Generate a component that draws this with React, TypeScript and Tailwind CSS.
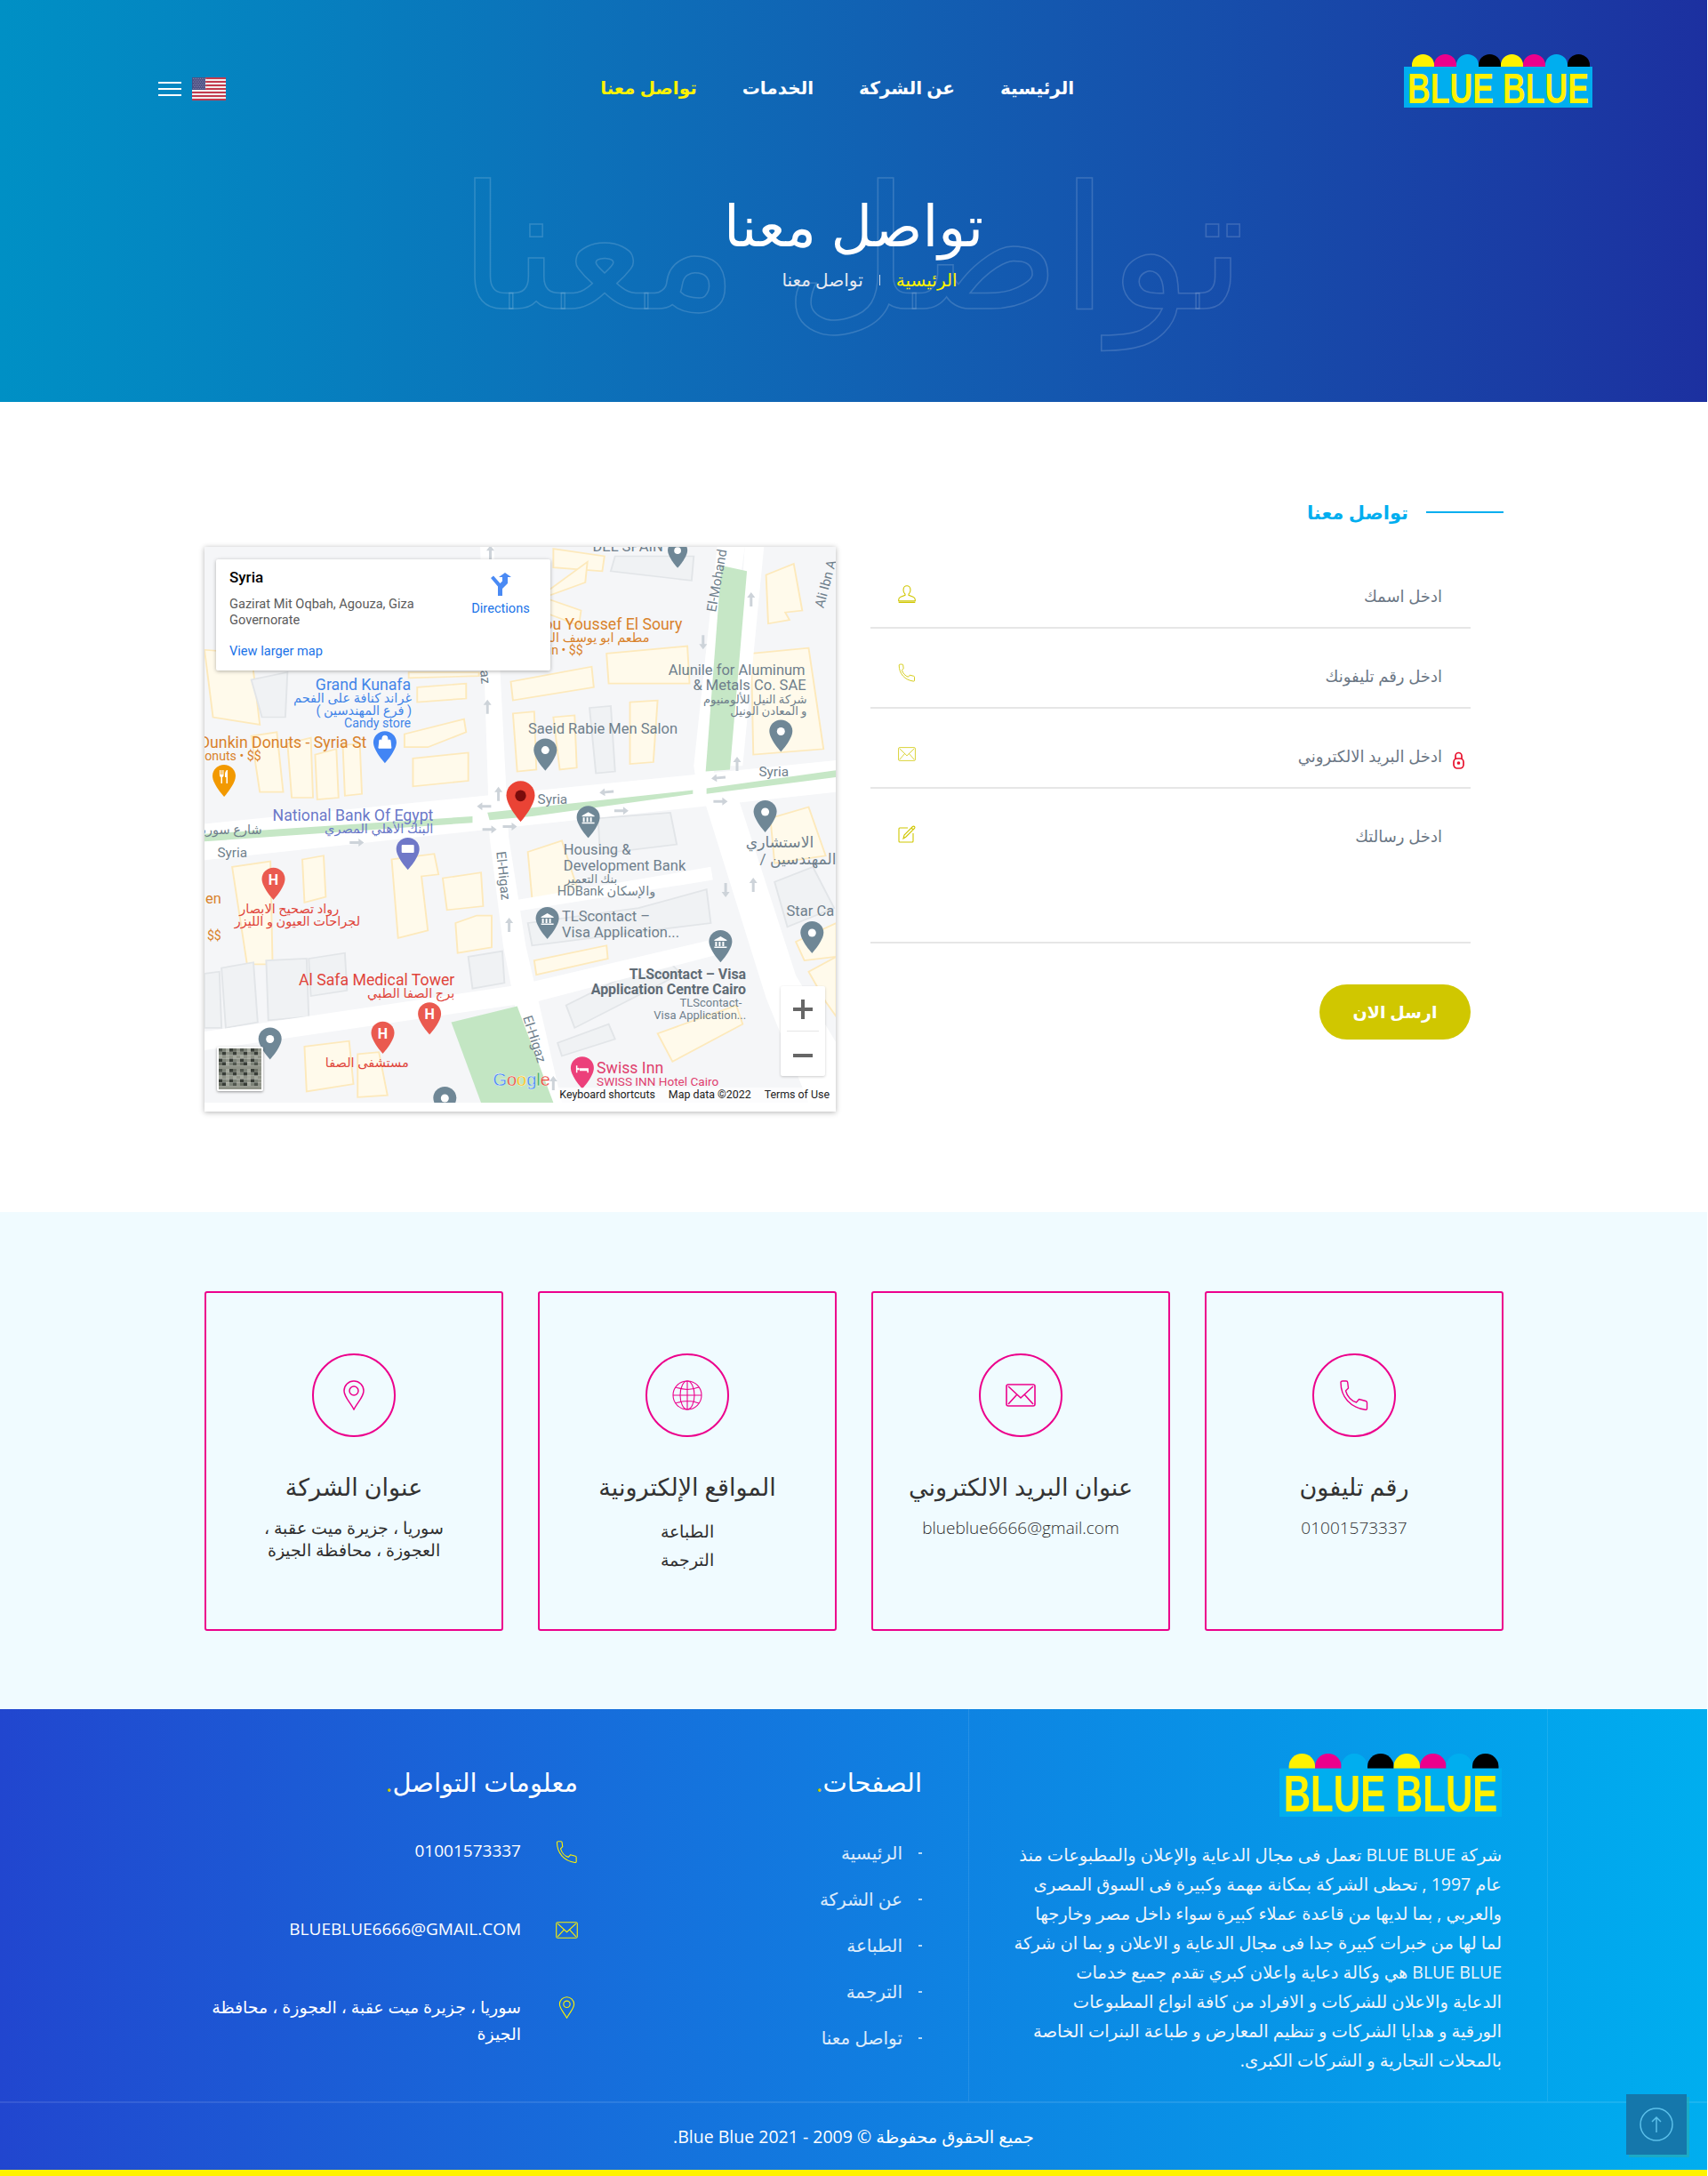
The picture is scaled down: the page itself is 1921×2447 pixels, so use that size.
import React from "react";

const ar = "font-['Open_Sans','DejaVu_Sans',sans-serif]";

function Logo({ w, h }: { w: number; h: number }) {
  const colors = ["#fff200", "#ec008c", "#00aeef", "#000", "#fff200", "#ec008c", "#00aeef", "#000"];
  return (
    <svg width={w} height={h} viewBox="0 0 212 60" preserveAspectRatio="none" className="block shrink-0" dir="ltr">
      {colors.map((c, i) => (
        <path key={i} d={`M${9 + i * 25} 15V12a12.5 12 0 0 1 25 0V15Z`} fill={c} />
      ))}
      <rect x="0" y="14" width="212" height="46" fill="#00aeef" />
      <text transform="translate(4,55) scale(0.743,1)" direction="ltr" fontFamily="'Liberation Sans',sans-serif" fontWeight="700" fontSize="48" fill="#fff200">BLUE BLUE</text>
    </svg>
  );
}

function PhoneIcon({ c, w = 34, h = 34, sw = 1.4 }: { c: string; w?: number; h?: number; sw?: number }) {
  return (
    <svg width={w} height={h} viewBox="0 0 34 34" fill="none" stroke={c} strokeWidth={sw} strokeLinejoin="round" className="block shrink-0">
      <path d="M2 2.500C2 1.500 3 1 4 1h4c1 0 1.600.5 1.700 1.500l.8 6.500-3 3c1.500 6 6.500 11.500 12 13l3-3.500 7.500 2c1 .3 1.500.8 1.500 1.800V32c0 1-1 1.500-2 1.300C13 31 2 19 2 2.500Z" />
    </svg>
  );
}
function MailIcon({ c, w = 34, h = 38, sw = 1.6 }: { c: string; w?: number; h?: number; sw?: number }) {
  return (
    <svg width={w} height={h} viewBox="0 0 34 26" preserveAspectRatio="none" fill="none" stroke={c} strokeWidth={sw} className="block shrink-0">
      <rect x="1" y="1" width="32" height="24" rx="2" />
      <path d="M3 3l14 13L31 3M3 23l10-11M31 23L21 12" />
    </svg>
  );
}
function PinIcon({ c, w = 24, h = 34, sw = 1.5 }: { c: string; w?: number; h?: number; sw?: number }) {
  return (
    <svg width={w} height={h} viewBox="0 0 24 34" fill="none" stroke={c} strokeWidth={sw} className="block shrink-0">
      <path d="M12 33C8 25 1 19 1 12a11 11 0 0 1 22 0c0 7-7 13-11 21Z" />
      <circle cx="12" cy="12" r="5" />
    </svg>
  );
}
function GlobeIcon({ c }: { c: string }) {
  return (
    <svg width="34" height="34" viewBox="0 0 34 34" fill="none" stroke={c} strokeWidth="1.1" className="block shrink-0">
      <circle cx="17" cy="17" r="16" />
      <ellipse cx="17" cy="17" rx="8" ry="16" />
      <path d="M17 1v32M1 17h32M4 8c8 3 18 3 26 0M4 26c8-3 18-3 26 0" />
    </svg>
  );
}
function UserIcon({ c }: { c: string }) {
  return (
    <svg width="20" height="20" viewBox="0 0 20 20" fill="none" stroke={c} strokeWidth="1.1" className="block shrink-0">
      <path d="M6 5.500C6 2.500 8 .7 10 .7s4 1.800 4 4.800c0 2.200-1 3.700-2 4.600v1.200l5 2c1.500.6 2.300 1.700 2.300 3.200v1.300H.7v-1.300c0-1.500.8-2.600 2.300-3.200l5-2v-1.200c-1-.9-2-2.400-2-4.600Z" />
      <path d="M.7 19.300h18.600" strokeWidth="1.600" />
    </svg>
  );
}
function EditIcon({ c }: { c: string }) {
  return (
    <svg width="20" height="20" viewBox="0 0 20 20" fill="none" stroke={c} strokeWidth="1.1" className="block shrink-0">
      <path d="M11 3H2a1 1 0 0 0-1 1v14a1 1 0 0 0 1 1h14a1 1 0 0 0 1-1V9" />
      <path d="M6 15l1-4L16.500 1.500a1.400 1.400 0 0 1 2 0 1.400 1.400 0 0 1 0 2L9 13l-3 2ZM15 3l2 2" />
    </svg>
  );
}

const navItems = ["الرئيسية", "عن الشركة", "الخدمات"];

function Flag() {
  const stripes = Array.from({ length: 13 });
  const dots: React.ReactNode[] = [];
  for (let r = 0; r < 7; r++) for (let k = 0; k < 8; k++) dots.push(<circle key={`${r}-${k}`} cx={1.5 + k * 2 + (r % 2)} cy={1.2 + r * 1.9} r=".45" fill="#c9cde0" />);
  return (
    <svg width="38" height="26" viewBox="0 0 38 26" className="block shrink-0">
      {stripes.map((_, i) => <rect key={i} y={i * 2} width="38" height="2" fill={i % 2 ? "#f3eded" : "#c23a4d"} />)}
      <rect width="15" height="14" fill="#4c4f83" />
      {dots}
    </svg>
  );
}

function Hero() {
  return (
    <section className="relative h-[452px] overflow-hidden bg-gradient-to-r from-[#0090c5] to-[#1c30a0]">
      <div className="absolute left-[535px] top-[152px] w-[866px] text-center whitespace-nowrap text-[194px] leading-[240px] text-transparent [-webkit-text-stroke:1.5px_rgba(255,255,255,0.16)]">تواصل معنا</div>
      <header className="relative flex items-start pr-[129px] pl-[178px] pt-[61px]">
        <Logo w={212} h={60} />
        <nav className="mr-[371px] flex gap-[51px] pt-[24px] text-[20px] font-bold leading-[28px] text-white whitespace-nowrap">
          {navItems.map((t) => <a key={t}>{t}</a>)}
          <a className="text-[#fff200]">تواصل معنا</a>
        </nav>
        <div className="mr-auto flex items-center gap-[12px] pt-[26px]" dir="ltr">
          <div className="flex w-[26px] flex-col gap-[5px]">
            <span className="h-[2px] bg-white" />
            <span className="h-[2px] bg-white" />
            <span className="h-[2px] bg-white" />
          </div>
          <Flag />
        </div>
      </header>
      <div className="relative mt-[96px] text-center">
        <h1 className="text-[64px] font-normal leading-[72px] text-white">تواصل معنا</h1>
        <div className="mt-[12px] flex items-center justify-center gap-[18px] pl-[36px] text-[20px] leading-[28px] text-[#e4e8f0]">
          <span className="text-[#fff200]">الرئيسية</span>
          <span className="h-[12px] w-px bg-[#cfd8e8]" />
          <span>تواصل معنا</span>
        </div>
      </div>
    </section>
  );
}

const S = (x: number, y: number) => [+((x - 20) / 2.09).toFixed(1), +((y - 35) / 2.376).toFixed(1)];

function Pin({ x, y, c, k = "dot", s = 1 }: { x: number; y: number; c: string; k?: string; s?: number }) {
  const [px, py] = S(x, y);
  return (
    <g transform={`translate(${px - 13 * s},${py - 18 * s}) scale(${s})`}>
      <path d="M13 0C5.800 0 0 5.600 0 12.600 0 22 13 36 13 36s13-14 13-23.400C26 5.600 20.200 0 13 0Z" fill={c} />
      {k === "dot" && <circle cx="13" cy="13" r="4.500" fill="#fff" />}
      {k === "bank" && <path d="M6 11l7-4 7 4v1H6Zm1 2h2v5H7Zm4 0h2v5h-2Zm4 0h2v5h-2ZM6 18.500h14V20H6Z" fill="#fff" />}
      {k === "H" && <text x="13" y="19" textAnchor="middle" fontSize="16" fontWeight="700" fill="#fff" fontFamily="Roboto,sans-serif">H</text>}
      {k === "food" && <path d="M8 6v6c0 1 1 2 1.500 2v7h1.500v-7c.5 0 1.500-1 1.500-2V6h-1v5h-.8V6h-.9v5H9V6Zm8 0c-1.500 1-2 3-2 5v3h1.500v7H17V6Z" fill="#fff" />}
      {k === "shop" && <path d="M7 10h12l1 9H6Zm3 0V8a3 3 0 0 1 6 0v2" fill="#fff" stroke="#fff" strokeWidth="1" />}
      {k === "atm" && <rect x="6" y="8" width="14" height="9" fill="#fff" rx="1" />}
      {k === "bed" && <path d="M6 10v8h1.500v-2h11v2H20v-5H10v3H7.500v-6Zm2.500 2.500a1.300 1.300 0 1 0 .01 0Z" fill="#fff" />}
    </g>
  );
}

type L = [string, number, number, string, number, string?, number?];
const blue = "#4285e8", gray = "#6f7f8c", orange = "#d9822b", red = "#e0453b", dark = "#5f6b75", purple = "#6a78c8";
const labels: L[] = [
  ["DEL SPAIN", 1098, 46, "end", 14, gray],
  ["ou Youssef El Soury", 1143, 255, "end", 15, orange],
  ["مطعم ابو يوسف السوري", 1066, 289, "end", 11, orange],
  ["in • $$", 910, 322, "end", 12, orange],
  ["Alunile for Aluminum", 1432, 376, "end", 14, gray],
  ["& Metals Co. SAE", 1434, 417, "end", 14, gray],
  ["شركة النيل للألومنيوم", 1436, 452, "end", 10, gray],
  ["و المعادن الونيل", 1436, 484, "end", 10, gray],
  ["Grand Kunafa", 505, 418, "end", 15, blue],
  ["غراند كنافة على الفحم", 507, 451, "end", 11, blue],
  ["( فرع المهندسين )", 507, 484, "end", 11, blue],
  ["Candy store", 505, 518, "end", 12, blue],
  ["Dunkin Donuts - Syria St", 401, 571, "end", 15, orange],
  ["onuts • $$", 153, 605, "end", 12, orange],
  ["Saeid Rabie Men Salon", 1132, 534, "end", 14, gray],
  ["Syria", 803, 722, "start", 13, gray],
  ["Syria", 1323, 648, "start", 13, gray],
  ["Syria", 50, 864, "start", 13, gray],
  ["National Bank Of Egypt", 558, 767, "end", 15, purple],
  ["البنك الأهلي المصري", 558, 801, "end", 11, purple],
  ["شارع سوريا", 155, 802, "end", 11, gray],
  ["Housing &", 864, 858, "start", 14, gray],
  ["Development Bank", 864, 899, "start", 14, gray],
  ["بنك التعمير", 990, 932, "end", 10, gray],
  ["HDBank والإسكان", 1080, 966, "end", 11, gray],
  ["TLScontact –", 860, 1036, "start", 14, gray],
  ["Visa Application...", 860, 1077, "start", 14, gray],
  ["TLScontact – Visa", 1293, 1189, "end", 13.5, dark, 700],
  ["Application Centre Cairo", 1293, 1231, "end", 13.5, dark, 700],
  ["TLScontact-", 1283, 1264, "end", 11, gray],
  ["Visa Application...", 1293, 1297, "end", 11, gray],
  ["Star Ca", 1388, 1022, "start", 14, gray],
  ["الاستشاري", 1452, 838, "end", 13, gray],
  ["/ المهندسين", 1505, 882, "end", 13, gray],
  ["Al Safa Medical Tower", 608, 1207, "end", 15, red],
  ["برج الصفا الطبي", 608, 1240, "end", 11, red],
  ["مستشفى الصفا", 500, 1426, "end", 11, red],
  ["رواد تصحيح الابصار", 336, 1014, "end", 11, red],
  ["لجراحات العيون و الليزر", 386, 1046, "end", 11, red],
  ["en", 22, 988, "start", 14, orange],
  ["$$", 26, 1086, "start", 12, orange],
  ["Swiss Inn", 942, 1441, "start", 15, "#e0406e"],
  ["SWISS INN Hotel Cairo", 942, 1474, "start", 11.5, "#e0406e"],
];

const yellow: [number, number][][] = [
  [[20, 310], [130, 320], [150, 510], [40, 490]],
  [[130, 540], [190, 530], [205, 690], [150, 690]],
  [[215, 560], [270, 545], [275, 705], [225, 705]],
  [[280, 590], [330, 575], [335, 705], [285, 710]],
  [[345, 565], [385, 560], [390, 695], [350, 700]],
  [[510, 600], [640, 585], [640, 660], [510, 675]],
  [[490, 535], [630, 495], [635, 530], [545, 570], [490, 570]],
  [[500, 370], [665, 370], [665, 380], [500, 385]],
  [[520, 410], [635, 400], [635, 440], [520, 450]],
  [[740, 395], [930, 355], [935, 410], [745, 445]],
  [[965, 320], [1155, 300], [1160, 400], [970, 400]],
  [[745, 480], [795, 475], [800, 630], [755, 635]],
  [[840, 490], [890, 485], [895, 625], [855, 630]],
  [[1020, 450], [1085, 445], [1075, 610], [1020, 615]],
  [[1305, 320], [1440, 305], [1475, 575], [1310, 590]],
  [[1340, 110], [1405, 80], [1425, 205], [1385, 210], [1395, 230], [1345, 240]],
  [[840, 40], [960, 60], [955, 100], [840, 90]],
  [[830, 150], [920, 75], [915, 130], [830, 165]],
  [[830, 175], [905, 205], [900, 245], [830, 215]],
  [[460, 870], [560, 855], [570, 910], [530, 915], [545, 1060], [475, 1080]],
  [[580, 920], [670, 905], [675, 995], [590, 1005]],
  [[610, 1040], [660, 1020], [695, 1020], [695, 1105], [615, 1120]],
  [[85, 890], [175, 875], [180, 1150], [120, 1150]],
  [[250, 870], [300, 860], [305, 970], [255, 985]],
  [[780, 850], [860, 820], [900, 960], [790, 975]],
  [[795, 1140], [965, 1100], [968, 1135], [800, 1178]],
  [[1085, 1335], [1270, 1260], [1285, 1310], [1120, 1410]],
  [[1350, 760], [1440, 730], [1480, 860], [1360, 880]],
  [[255, 1370], [360, 1355], [370, 1470], [260, 1490]],
  [[380, 1390], [430, 1385], [450, 1500], [380, 1505]],
  [[1410, 1090], [1505, 1040], [1505, 1130], [1430, 1140]],
  [[1440, 1170], [1505, 1130], [1505, 1290], [1480, 1250]],
];
const greys: [number, number][][] = [
  [[130, 390], [215, 370], [210, 490], [155, 490]],
  [[925, 465], [975, 460], [985, 635], [940, 640]],
  [[985, 60], [1170, 60], [1165, 125], [975, 100]],
  [[945, 760], [1115, 745], [1130, 830], [950, 855]],
  [[60, 1160], [135, 1145], [145, 1305], [70, 1320]],
  [[165, 1140], [260, 1135], [265, 1290], [170, 1300]],
  [[265, 1135], [350, 1120], [355, 1220], [270, 1235]],
  [[20, 1175], [55, 1170], [60, 1320], [20, 1320]],
  [[640, 1130], [720, 1115], [725, 1200], [650, 1215]],
  [[780, 1040], [1040, 1000], [1200, 950], [1210, 1040], [790, 1100]],
  [[870, 1260], [1100, 1130], [1140, 1175], [890, 1320]],
  [[850, 1360], [970, 1310], [985, 1350], [860, 1395]],
  [[1360, 930], [1450, 890], [1500, 1000], [1390, 1050]],
];

const arrows: [number, number, number][] = [
  [685, 462, 0], [711, 695, 0], [1305, 175, 0], [1192, 290, 180], [1272, 615, 0], [1228, 652, -95], [965, 690, -95],
  [1000, 740, 90], [677, 728, -90], [690, 790, 90], [738, 782, 90], [378, 825, 90], [1233, 715, 90], [1245, 952, 180], [1310, 938, 0], [736, 1045, 0], [840, 1468, 0], [692, 50, 0],
];

function Sat() {
  const c: React.ReactNode[] = [];
  const g = ["#4f554d", "#7d8378", "#a3a79c", "#383d37", "#696e63", "#8f9388"];
  for (let y = 0; y < 12; y++) for (let x = 0; x < 12; x++) c.push(<rect key={`${x}-${y}`} x={x * 4} y={y * 4} width="4" height="4" fill={g[(x * 7 + y * 13 + x * y) % 6]} />);
  return <svg width="48" height="46" viewBox="0 0 48 48" preserveAspectRatio="none" className="block">{c}</svg>;
}

function GMap() {
  const [gx, gy] = S(698, 1460);
  return (
    <div className="relative h-[635px] w-[710px] shrink-0 bg-white shadow-[0_1px_6px_rgba(0,0,0,0.3)]" dir="ltr">
      <svg width="710" height="625" viewBox="0 0 710 625" className="block font-['Roboto','DejaVu_Sans',sans-serif]">
        <rect width="710" height="625" fill="#f5f6f8" />
        <g transform="translate(-9.57,-14.73) scale(0.4785,0.4209)">
          {yellow.map((p, i) => <polygon key={i} points={p.map((q) => q.join(",")).join(" ")} fill="#fffaeb" stroke="#fde9bb" strokeWidth="4" />)}
          {greys.map((p, i) => <polygon key={i} points={p.map((q) => q.join(",")).join(" ")} fill="#f0f2f4" stroke="#e2e5e8" strokeWidth="4" />)}
          <polygon points="20,775 1505,605 1505,690 20,872" fill="#fff" />
          <polygon points="668,35 700,35 735,810 775,1100 860,1520 795,1520 722,1100 690,810" fill="#fff" />
          <polygon points="1170,620 1225,35 1290,35 1210,700 1180,700" fill="#fff" />
          <polygon points="1290,35 1335,35 1285,620 1255,620" fill="#fff" />
          <polygon points="1190,695 1270,690 1410,1180 1505,1360 1505,1520 1440,1520 1340,1240" fill="#fff" />
          <polygon points="20,1330 760,1205 1230,1080 1240,1120 800,1250 20,1380" fill="#fff" />
          <polygon points="720,985 1210,890 1215,925 745,1010" fill="#fff" />
          <polygon points="1235,85 1295,100 1255,630 1198,635" fill="#c6e7c6" />
          <polygon points="20,802 650,755 650,772 20,822" fill="#c6e7c6" />
          <polygon points="685,745 1168,685 1168,695 790,755 690,765" fill="#c6e7c6" />
          <polygon points="1200,680 1505,632 1505,650 1200,695" fill="#c6e7c6" />
          <polygon points="600,1305 755,1262 840,1520 670,1520" fill="#c3e6c3" />
        </g>
        {arrows.map(([x, y, r], i) => {
          const [px, py] = S(x, y);
          return <path key={i} transform={`translate(${px},${py}) rotate(${r})`} d="M0-8L4.500-2H1.500V8H-1.500V-2H-4.500Z" fill="#cdd3d9" />;
        })}
        {labels.map(([t, x, y, a, fs, c, w], i) => {
          const [px, py] = S(x, y);
          const isAr = /[\u0600-\u06ff]/.test(t);
          return <text key={i} x={px} y={py} textAnchor={a as "end" | "start"} fontSize={isAr ? fs * 1.32 : fs * 1.18} fill={c} fontWeight={w ?? 400} direction="ltr">{t}</text>;
        })}
        <text transform={`translate(${S(1222, 210)[0]},${S(1222, 210)[1]}) rotate(-80)`} fontSize="15" fill={gray}>El-Mohand</text>
        <text transform={`translate(${S(1475, 200)[0]},${S(1475, 200)[1]}) rotate(-75)`} fontSize="15" fill={gray}>Ali Ibn A</text>
        <text transform={`translate(${S(706, 850)[0]},${S(706, 850)[1]}) rotate(84)`} fontSize="15" fill={gray}>El-Higaz</text>
        <text transform={`translate(${S(768, 1292)[0]},${S(768, 1292)[1]}) rotate(72)`} fontSize="15" fill={gray}>El-Higaz</text>
        <text transform={`translate(${S(668, 365)[0]},${S(668, 365)[1]}) rotate(84)`} fontSize="15" fill={gray}>az</text>
        <Pin x={1132} y={55} c="#6f8796" s={0.85} />
        <Pin x={444} y={570} c="#4285f4" k="shop" />
        <Pin x={66} y={660} c="#f29900" k="food" />
        <Pin x={821} y={590} c="#6f8796" />
        <Pin x={1375} y={540} c="#6f8796" />
        <Pin x={1338} y={755} c="#6f8796" />
        <Pin x={922} y={770} c="#6f8796" k="bank" />
        <Pin x={498} y={855} c="#6f78c8" k="atm" />
        <Pin x={182} y={935} c="#ea5a4f" k="H" />
        <Pin x={826} y={1040} c="#6f8796" k="bank" />
        <Pin x={1233} y={1102} c="#6f8796" k="bank" />
        <Pin x={1448} y={1078} c="#6f8796" />
        <Pin x={549} y={1295} c="#ea5a4f" k="H" />
        <Pin x={439} y={1346} c="#ea5a4f" k="H" />
        <Pin x={174} y={1362} c="#6f8796" />
        <Pin x={585} y={1520} c="#6f8796" />
        <Pin x={908} y={1440} c="#ec407a" k="bed" />
        <g transform={`translate(${S(763, 715)[0] - 16},${S(763, 715)[1] - 23}) scale(1.231,1.278)`}>
          <path d="M13 0C5.800 0 0 5.600 0 12.600 0 22 13 36 13 36s13-14 13-23.400C26 5.600 20.200 0 13 0Z" fill="#ea4335" />
          <circle cx="13" cy="13" r="5" fill="#7a0c0c" />
        </g>
        <text x={gx} y={gy + 6} fontSize="20" fontFamily="'Liberation Sans',sans-serif" stroke="#fff" strokeWidth="0.3">
          <tspan fill="#4285f4">G</tspan><tspan fill="#ea4335">o</tspan><tspan fill="#fbbc05">o</tspan><tspan fill="#4285f4">g</tspan><tspan fill="#34a853">l</tspan><tspan fill="#ea4335">e</tspan>
        </text>
      </svg>

      <div className="absolute left-[13px] top-[14px] h-[125px] w-[376px] rounded-[2px] bg-white shadow-[0_1px_4px_rgba(0,0,0,0.3)] font-['Roboto',sans-serif]">
        <div className="absolute left-[15px] top-[10px] text-[17px] font-medium leading-[20px] text-black">Syria</div>
        <div className="absolute left-[15px] top-[41px] w-[240px] text-[14.6px] leading-[18px] text-[#5b5b5b]">Gazirat Mit Oqbah, Agouza, Giza Governorate</div>
        <div className="absolute left-[15px] top-[94px] text-[14.6px] leading-[18px] text-[#1a73e8]">View larger map</div>
        <div className="absolute left-[280px] top-[15px] flex w-[80px] flex-col items-center text-[14.6px] leading-[18px] text-[#1a73e8]">
          <svg width="24" height="26" viewBox="0 0 24 26" fill="#4a8af4" className="mb-[5px] block">
            <path d="M9 26V15.500L1 6l3-2.500L11.500 12 14 9.500V5h-4l7-5 7 5h-4v7l-6 6v8Z" />
          </svg>
          Directions
        </div>
      </div>

      <div className="absolute left-[648px] top-[494px] flex h-[101px] w-[50px] flex-col items-center rounded-[2px] bg-white shadow-[0_1px_3px_rgba(0,0,0,0.2)]">
        <svg width="22" height="22" viewBox="0 0 22 22" fill="#666" className="mt-[15px] block"><path d="M9 0h4v9h9v4h-9v9H9v-9H0V9h9Z" /></svg>
        <span className="mt-[13px] h-px w-[36px] bg-[#e6e6e6]" />
        <span className="mt-[25px] h-[4px] w-[22px] bg-[#666]" />
      </div>

      <div className="absolute left-[14px] top-[562px] h-[50px] w-[52px] overflow-hidden rounded-[2px] border-2 border-white shadow-[0_1px_3px_rgba(0,0,0,0.4)]"><Sat /></div>

      <div className="absolute right-0 top-[608px] flex h-[17px] items-center gap-[15px] bg-white/70 pl-[4px] pr-[7px] font-['Roboto',sans-serif] text-[12.4px] text-[#222]">
        <span>Keyboard shortcuts</span>
        <span>Map data ©2022</span>
        <span>Terms of Use</span>
      </div>
    </div>
  );
}

const fields = [
  { t: "ادخل اسمك", h: "h-[90px]", i: <UserIcon c="#d0c700" />, m: "mt-0" },
  { t: "ادخل رقم تليفونك", h: "h-[90px]", i: <PhoneIcon c="#d0c700" w={20} h={21} sw={1.5} />, m: "-mt-[2px]" },
  { t: "ادخل البريد الالكتروني", h: "h-[90px]", i: <MailIcon c="#d0c700" w={20} h={16} sw={1.300} />, m: "mt-[2px]" },
  { t: "ادخل رسالتك", h: "h-[174px]", i: <EditIcon c="#d0c700" />, m: "mt-0" },
];

function Contact() {
  return (
    <section className="h-[911px] bg-white pr-[229px] pt-[107px]">
      <div className="flex items-start justify-between w-[1461px]">
        <div className="w-[712px]">
          <div className="flex h-[34px] items-center gap-[20px]">
            <span className="h-[2px] w-[87px] bg-[#00aeef]" />
            <span className="text-[21px] font-bold leading-[34px] text-[#00aeef]">تواصل معنا</span>
          </div>
          <div className="mr-[37px] mt-[24px] w-[675px]">
            {fields.map((f, n) => (
              <div key={f.t} className={`relative flex items-start justify-between border-b-2 border-[#e6e6e6] pl-[31px] pr-[32px] pt-[41px] ${f.h}`}>
                <span className="text-[18px] leading-[24px] text-[#6b7785]">{f.t}</span>
                <span className={f.m}>{f.i}</span>
                {n === 2 && (
                  <svg width="13" height="20" viewBox="0 0 13 20" fill="none" stroke="#e8112d" strokeWidth="1.700" className="absolute right-[7px] top-[48px] block">
                    <path d="M3 8V5a3.500 3.500 0 0 1 7 0v3" />
                    <rect x="1" y="8" width="11" height="11" rx="4" />
                    <circle cx="6.500" cy="13" r="1" fill="#e8112d" />
                  </svg>
                )}
              </div>
            ))}
            <button className="mt-[46px] block h-[62px] w-[170px] rounded-full bg-[#d0c700] text-[19px] font-bold text-white">ارسل الان</button>
          </div>
        </div>
        <div className="mt-[56px]"><GMap /></div>
      </div>
    </section>
  );
}

const pink = "#ec008c";
const cards = [
  { icon: <PhoneIcon c={pink} />, title: "رقم تليفون", body: ["01001573337"], lead: "leading-[25px]" },
  { icon: <MailIcon c={pink} w={34} h={26} />, title: "عنوان البريد الالكتروني", body: ["blueblue6666@gmail.com"], lead: "leading-[25px]" },
  { icon: <GlobeIcon c={pink} />, title: "المواقع الإلكترونية", body: ["الطباعة", "الترجمة"], lead: "leading-[32px]" },
  { icon: <PinIcon c={pink} />, title: "عنوان الشركة", body: ["سوريا ، جزيرة ميت عقبة ،", "العجوزة ، محافظة الجيزة"], lead: "leading-[25px]" },
];

function Cards() {
  return (
    <section className="h-[559px] bg-[#f0fbff] pr-[229px] pt-[89px]">
      <div className="grid w-[1461px] grid-cols-4 gap-[39px]">
        {cards.map((c) => (
          <div key={c.title} className="flex h-[382px] flex-col items-center rounded-[3px] border-2 border-[#ec008c] pt-[68px] text-center">
            <div className="flex h-[94px] w-[94px] items-center justify-center rounded-full border-2 border-[#ec008c]">{c.icon}</div>
            <h3 className="mt-[36px] whitespace-nowrap text-[27px] font-normal leading-[40px] text-[#333]">{c.title}</h3>
            <div className={`mt-[14px] whitespace-nowrap text-[19px] font-light text-[#2f2f2f] ${c.lead}`}>
              {c.body.map((b) => <div key={b}>{b}</div>)}
            </div>
          </div>
        ))}
      </div>
    </section>
  );
}

const para = [
  "شركة BLUE BLUE تعمل فى مجال الدعاية والإعلان والمطبوعات منذ",
  "عام 1997 , تحظى الشركة بمكانة مهمة وكبيرة فى السوق المصرى",
  "والعربي , بما لديها من قاعدة عملاء كبيرة سواء داخل مصر وخارجها",
  "لما لها من خبرات كبيرة جدا فى مجال الدعاية و الاعلان و بما ان شركة",
  "BLUE BLUE هي وكالة دعاية واعلان كبري تقدم جميع خدمات",
  "الدعاية والاعلان للشركات و الافراد من كافة انواع المطبوعات",
  "الورقية و هدايا الشركات و تنظيم المعارض و طباعة البنرات الخاصة",
  "بالمحلات التجارية و الشركات الكبرى.",
];

function Heading({ t }: { t: string }) {
  return <h4 className="whitespace-nowrap text-[29px] font-normal leading-[40px] text-white">{t}<span className="text-[#d8c800]">.</span></h4>;
}

function Footer() {
  return (
    <footer className="h-[525px] bg-gradient-to-r from-[#2146cf] to-[#00aeef]">
      <div className="flex h-[443px] border-b-2 border-white/10 pr-[179px]">
        <div className="h-full w-[652px] border-x border-white/10 px-[51px] pt-[50px]">
          <div className="flex justify-start"><Logo w={250} h={71} /></div>
          <div className="mt-[26px] whitespace-nowrap text-[19.5px] leading-[33px] text-[#eef4fb]">
            {para.map((p) => <div key={p}>{p}</div>)}
          </div>
        </div>
        <div className="w-[389px] pr-[52px] pt-[62px]">
          <Heading t="الصفحات" />
          <ul className="mt-[48px] flex flex-col gap-[28px] text-[20px] leading-[24px] text-white/85">
            {["الرئيسية", "عن الشركة", "الطباعة", "الترجمة", "تواصل معنا"].map((t) => (
              <li key={t} className="flex items-center gap-[18px]"><span className="h-[2px] w-[4px] bg-white/70" />{t}</li>
            ))}
          </ul>
        </div>
        <div className="w-[416px] pr-[50px] pt-[62px]">
          <Heading t="معلومات التواصل" />
          <div className="mt-[42px] flex flex-col gap-[58px] text-[19px] font-medium leading-[30px] text-white">
            <div className="flex items-start gap-[39px]"><span className="mt-[4px]"><PhoneIcon c="#fff200" w={25} h={25} sw={1.500} /></span><span>01001573337</span></div>
            <div className="flex items-start gap-[39px]"><span className="mt-[7px]"><MailIcon c="#fff200" w={25} h={19} sw={1.500} /></span><span>BLUEBLUE6666@GMAIL.COM</span></div>
            <div className="flex items-start gap-[39px]"><span className="mt-[3px]"><PinIcon c="#fff200" w={25} h={25} sw={1.500} /></span><span className="whitespace-nowrap">سوريا ، جزيرة ميت عقبة ، العجوزة ، محافظة<br />الجيزة</span></div>
          </div>
        </div>
      </div>
      <div className="flex h-[75px] items-center justify-center text-[19.5px] font-medium text-white">جميع الحقوق محفوظة © 2009 - 2021 Blue Blue.</div>
      <div className="h-[7px] bg-[#fff200]" />
    </footer>
  );
}

export default function App() {
  return (
    <div dir="rtl" className={`relative w-[1920px] ${ar}`}>
      <Hero />
      <Contact />
      <Cards />
      <Footer />
      <div className="absolute left-[1829px] top-[2355px] flex h-[68px] w-[68px] items-center justify-center bg-[#1577ab] shadow-[3px_3px_0_rgba(40,170,180,0.7)]">
        <svg width="38" height="38" viewBox="0 0 38 38" fill="none" stroke="#5cc0ea" strokeWidth="1.500"><circle cx="19" cy="19" r="18" /><path d="M19 28V11M14 16l5-5 5 5" /></svg>
      </div>
    </div>
  );
}
